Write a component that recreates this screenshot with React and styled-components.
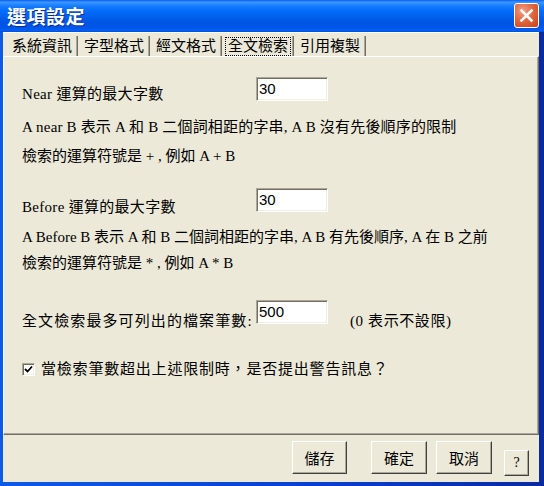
import styled, { createGlobalStyle } from 'styled-components';

const GlobalStyle = createGlobalStyle`
  html, body {
    margin: 0;
    padding: 0;
    width: 544px;
    height: 486px;
    overflow: hidden;
    background: #ece9d8;
  }
`;

const FONT = `"Liberation Serif", "Noto Sans CJK TC", serif`;

const Window = styled.div`
  width: 544px;
  height: 486px;
  display: flex;
  flex-direction: column;
  background: linear-gradient(to right, #0d5ae6 0px, #0a3fd0 60%, #0a2a9e 100%);
  box-sizing: border-box;
`;

const TitleBar = styled.div`
  height: 32px;
  flex-shrink: 0;
  display: flex;
  align-items: center;
  justify-content: space-between;
  padding: 0 5px 0 7px;
  background: linear-gradient(
    to bottom,
    #0a5fef 0%,
    #3d95ff 7%,
    #2a8bff 12%,
    #1078ff 22%,
    #036bfc 35%,
    #0263ee 50%,
    #0058e6 62%,
    #0054e3 74%,
    #0056ea 88%,
    #0060f6 96%,
    #0548d0 100%
  );
`;

const Title = styled.div`
  color: #fff;
  font-family: "Noto Sans CJK TC", sans-serif;
  font-weight: 700;
  font-size: 19px;
  line-height: 20px;
  letter-spacing: 0.5px;
  text-shadow: 1px 1px 0 #0b2a8a;
`;

const CloseButton = styled.div`
  width: 25px;
  height: 25px;
  box-sizing: border-box;
  border: 1px solid #fff;
  border-radius: 3px;
  background: radial-gradient(circle at 35% 30%, #f0a088 0%, #e2673f 45%, #c8401c 100%);
  display: flex;
  align-items: center;
  justify-content: center;
  margin-top: -1px;
`;

const Body = styled.div`
  flex: 1;
  margin: 0 5px 4px 3px;
  background: #ece9d8;
  display: flex;
  flex-direction: column;
  min-height: 0;
`;

const TabStrip = styled.div`
  height: 24px;
  flex-shrink: 0;
  display: flex;
  align-items: flex-end;
  padding-left: 3px;
  border-top: 1px solid #fff;
  box-sizing: border-box;
`;

const Tab = styled.div`
  height: 20px;
  box-sizing: border-box;
  padding: 0 5px 0 6px;
  border-right: 1px solid #716f64;
  box-shadow: inset -1px 0 #aca899;
  display: flex;
  align-items: center;
  font-family: ${FONT};
  font-size: 15px;
  color: #000;
  white-space: nowrap;
`;

const TabLabel = styled.span`
  display: inline-block;
  line-height: 15px;
  padding: ${({ $active }) => ($active ? '1px 2px' : '0')};
  margin: ${({ $active }) => ($active ? '0 -3px' : '0')};
  border: ${({ $active }) => ($active ? '1px dotted #000' : 'none')};
`;

const Panel = styled.div`
  flex: 1;
  display: flex;
  flex-direction: column;
  border-top: 1px solid #fff;
  border-left: 1px solid #fff;
  border-right: 1px solid #716f64;
  border-bottom: 1px solid #716f64;
  box-shadow: inset -1px -1px #aca899;
  padding: 20px 0 0 18px;
  font-family: ${FONT};
  font-size: 15px;
  color: #000;
`;

const FieldRow = styled.div`
  display: flex;
  align-items: flex-start;
  height: 24px;
  margin-top: ${({ $top }) => $top || 0}px;
`;

const Label = styled.div`
  width: 234px;
  line-height: 18px;
  margin-top: ${({ $drop }) => $drop || 0}px;
  letter-spacing: ${({ $spacing }) => $spacing || 0}px;
  white-space: nowrap;
`;

const TextBox = styled.div`
  width: 72px;
  height: 24px;
  box-sizing: border-box;
  background: #fff;
  border-top: 1px solid #aca899;
  border-left: 1px solid #aca899;
  border-right: 1px solid #fff;
  border-bottom: 1px solid #fff;
  box-shadow: inset 1px 1px #716f64, inset -1px -1px #f1efe2;
  font-family: "Liberation Sans", sans-serif;
  font-size: 15px;
  line-height: 17px;
  padding: 2px 0 0 2px;
`;

const Hint = styled.span`
  margin-left: 22px;
  margin-top: ${({ $drop }) => $drop || 0}px;
  line-height: 18px;
  letter-spacing: 0.6px;
  white-space: nowrap;
`;

const Line = styled.div`
  line-height: 20px;
  white-space: nowrap;
  letter-spacing: ${({ $spacing }) => $spacing || 0}px;
  margin-top: ${({ $top }) => $top || 0}px;
`;

const CheckRow = styled.label`
  display: flex;
  align-items: center;
  gap: 6px;
  height: 20px;
  margin-top: ${({ $top }) => $top || 0}px;
  line-height: 20px;
  letter-spacing: 0.8px;
  white-space: nowrap;
`;

const CheckBox = styled.span`
  width: 13px;
  height: 13px;
  flex-shrink: 0;
  box-sizing: border-box;
  background: #fff;
  border-top: 1px solid #aca899;
  border-left: 1px solid #aca899;
  border-right: 1px solid #fff;
  border-bottom: 1px solid #fff;
  box-shadow: inset 1px 1px #716f64, inset -1px -1px #f1efe2;
  display: flex;
  align-items: center;
  justify-content: center;
`;

const Footer = styled.div`
  height: 47px;
  flex-shrink: 0;
  display: flex;
  justify-content: flex-end;
  align-items: flex-start;
  padding: 6px 10px 0 0;
  box-sizing: border-box;
`;

const Button = styled.div`
  width: ${({ $w }) => $w}px;
  height: ${({ $h }) => $h || 33}px;
  margin-top: ${({ $top }) => $top || 0}px;
  margin-right: ${({ $gap }) => $gap || 0}px;
  box-sizing: border-box;
  background: #ece9d8;
  border-top: 1px solid #fff;
  border-left: 1px solid #fff;
  border-right: 1px solid #404040;
  border-bottom: 1px solid #404040;
  box-shadow: inset -1px -1px #aca899;
  display: flex;
  align-items: center;
  justify-content: center;
  font-family: ${FONT};
  font-size: ${({ $small }) => ($small ? 14 : 15)}px;
  color: #000;
`;

const tabs = ['系統資訊', '字型格式', '經文格式', '全文檢索', '引用複製'];

export default function App() {
  return (
    <>
      <GlobalStyle />
      <Window>
        <TitleBar>
          <Title>選項設定</Title>
          <CloseButton>
            <svg width="15" height="15" viewBox="0 0 15 15">
              <path d="M2.5 2.5 L12.5 12.5 M12.5 2.5 L2.5 12.5" stroke="#fff" strokeWidth="2.6" strokeLinecap="square" />
            </svg>
          </CloseButton>
        </TitleBar>
        <Body>
          <TabStrip>
            {tabs.map((t, i) => (
              <Tab key={t}>
                <TabLabel $active={i === 3}>{t}</TabLabel>
              </Tab>
            ))}
          </TabStrip>
          <Panel>
            <FieldRow>
              <Label $drop={8} $spacing={0.3}>Near 運算的最大字數</Label>
              <TextBox>30</TextBox>
            </FieldRow>
            <Line $top={16} $spacing={0.18}>A near B 表示 A 和 B 二個詞相距的字串, A B 沒有先後順序的限制</Line>
            <Line $top={9}>檢索的運算符號是 + , 例如 A + B</Line>
            <FieldRow $top={22}>
              <Label $drop={10} $spacing={0.3}>Before 運算的最大字數</Label>
              <TextBox>30</TextBox>
            </FieldRow>
            <Line $top={15}>A Before B 表示 A 和 B 二個詞相距的字串, A B 有先後順序, A 在 B 之前</Line>
            <Line $top={6}>檢索的運算符號是 * , 例如 A * B</Line>
            <FieldRow $top={27}>
              <Label $drop={12} $spacing={1.1}>全文檢索最多可列出的檔案筆數:</Label>
              <TextBox>500</TextBox>
              <Hint $drop={12}>(0 表示不設限)</Hint>
            </FieldRow>
            <CheckRow $top={35}>
              <CheckBox>
                <svg width="9" height="9" viewBox="0 0 9 9">
                  <path d="M1 4 L3.5 6.5 L8 1.5" stroke="#000" strokeWidth="1.8" fill="none" />
                </svg>
              </CheckBox>
              當檢索筆數超出上述限制時，是否提出警告訊息？
            </CheckRow>
          </Panel>
          <Footer>
            <Button $w={55} $gap={24}>儲存</Button>
            <Button $w={56} $gap={9}>確定</Button>
            <Button $w={56} $gap={12}>取消</Button>
            <Button $w={25} $h={26} $top={9} $small>?</Button>
          </Footer>
        </Body>
      </Window>
    </>
  );
}
